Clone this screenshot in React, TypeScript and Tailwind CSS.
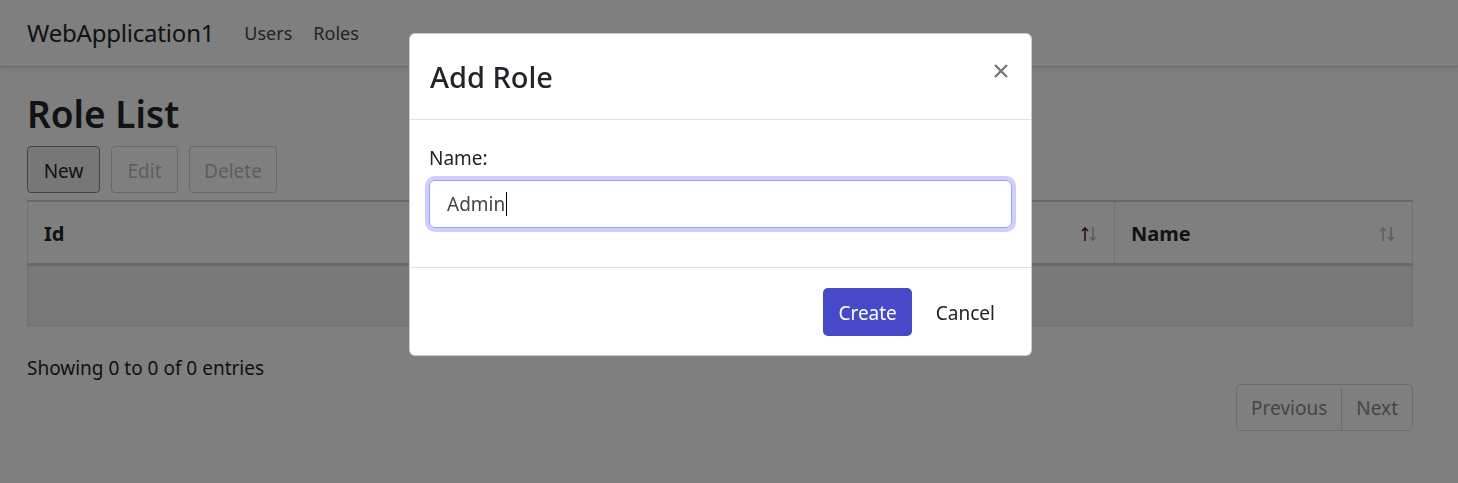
import React from 'react';

const font = { fontFamily: '"Noto Sans", "Open Sans", sans-serif' };

const SortIcon: React.FC<{ up: string; down: string }> = ({ up, down }) => (
  <svg width="18" height="16" viewBox="0 0 18 16" fill="none">
    <path d="M5 15V2M2 5l3-3 3 3" stroke={up} strokeWidth="1.6" />
    <path d="M13 1v13M10 11l3 3 3-3" stroke={down} strokeWidth="1.6" />
  </svg>
);

const Page: React.FC = () => (
  <div className="min-h-screen bg-white text-[#212529]">
    <nav className="flex h-[67px] items-center border-b border-[#dcdcdc] px-[27px] shadow-[0_2px_6px_rgba(0,0,0,0.08)]">
      <span className="mr-[30px] text-[24px] tracking-[-0.2px]">WebApplication1</span>
      <a className="mr-[21px] text-[18px] text-[#444]">Users</a>
      <a className="text-[18px] text-[#444]">Roles</a>
    </nav>

    <main className="w-[1413px] pl-[27px]">
      <h1 className="mt-[23px] text-[37px] font-semibold leading-[48px]">Role List</h1>

      <div className="mt-[8px] flex gap-[11px] text-[19px]">
        <button className="h-[47px] w-[73px] rounded-[4px] border border-[#888] bg-[#eeeeee] pt-[3px] text-[#222]">New</button>
        <button className="h-[47px] w-[67px] rounded-[4px] border border-[#d0d0d0] pt-[3px] text-[#bdbdbd]">Edit</button>
        <button className="h-[47px] w-[88px] rounded-[4px] border border-[#d0d0d0] pt-[3px] text-[#bdbdbd]">Delete</button>
      </div>

      <table className="mt-[7px] w-full border-collapse border border-[#dee2e6] text-[20px]">
        <thead>
          <tr className="h-[63px] border-t-2 border-b-[3px] border-[#cfd1d6]">
            <th className="w-[1087px] border-r border-[#dee2e6] px-[16px] pt-[3px] text-left font-bold">
              <div className="flex items-center justify-between">
                <span>Id</span>
                <SortIcon up="#6a1a1a" down="#b8b8b8" />
              </div>
            </th>
            <th className="px-[16px] pt-[3px] text-left font-bold">
              <div className="flex items-center justify-between">
                <span>Name</span>
                <SortIcon up="#c4c4c4" down="#b8b8b8" />
              </div>
            </th>
          </tr>
        </thead>
        <tbody>
          <tr className="h-[61px] bg-[#f3f3f3]">
            <td colSpan={2}></td>
          </tr>
        </tbody>
      </table>

      <div className="mt-[27px] text-[19px] leading-[30px]">Showing 0 to 0 of 0 entries</div>

      <div className="mt-[1px] flex justify-end">
        <div className="flex h-[47px] overflow-hidden rounded-[5px] border border-[#d8d8d8] pt-[3px] text-[19px] text-[#8c8c8c]">
          <span className="flex items-center border-r border-[#d8d8d8] px-[14px]">Previous</span>
          <span className="flex items-center px-[14px]">Next</span>
        </div>
      </div>
    </main>
  </div>
);

const Modal: React.FC = () => (
  <div className="fixed inset-0 bg-black/50">
    <div className="ml-[409px] mt-[33px] w-[623px] rounded-[6px] border border-black/20 bg-white text-[#212529]">
      <div className="flex h-[86px] items-center justify-between border-b border-[#dee2e6] px-[20px]">
        <h5 className="text-[29px] font-medium">Add Role</h5>
        <button className="-mr-[3px] mb-[12px] p-[6px]">
          <svg width="14" height="14" viewBox="0 0 14 14">
            <path d="M1 1l12 12M13 1L1 13" stroke="#777" strokeWidth="2.4" />
          </svg>
        </button>
      </div>

      <div className="px-[19px] pb-[39px] pt-[24px]">
        <label className="block text-[19px] leading-[28px]">Name:</label>
        <div className="mt-[8px] flex h-[48px] items-center rounded-[6px] border border-[#8fa8f8] px-[17px] text-[19px] text-[#444] shadow-[0_0_0_4px_#d4ccff]">
          <span>Admin</span>
          <span className="ml-[1px] h-[24px] w-[1px] bg-black" />
        </div>
      </div>

      <div className="flex h-[88px] items-center justify-end gap-[8px] border-t border-[#dee2e6] px-[20px]">
        <button className="h-[48px] rounded-[5px] bg-[#4649c8] px-[15px] pt-[3px] text-[19px] text-white">Create</button>
        <button className="h-[48px] px-[16px] pt-[3px] text-[19px] text-[#222]">Cancel</button>
      </div>
    </div>
  </div>
);

export default function App() {
  return (
    <div style={font} className="relative">
      <Page />
      <Modal />
    </div>
  );
}
